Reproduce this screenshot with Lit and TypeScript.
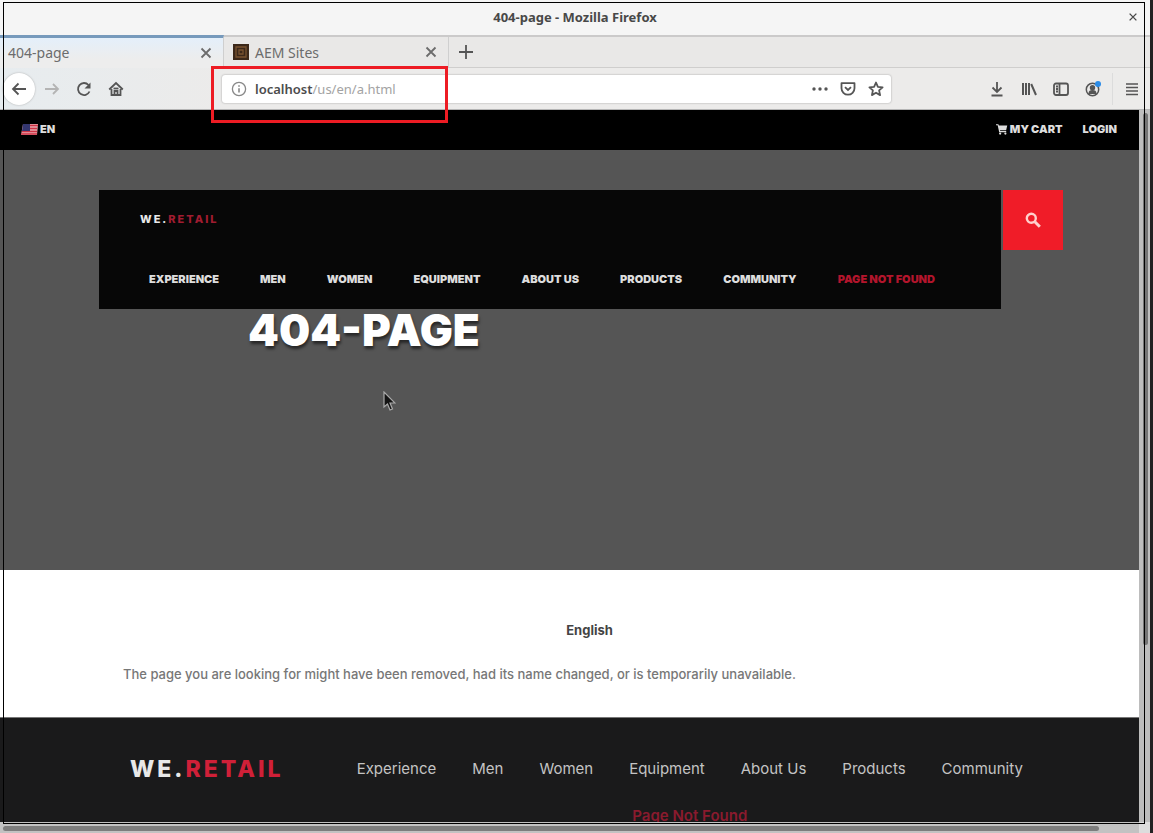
import { LitElement, html, css, svg } from "lit";
import { customElement, property } from "lit/decorators.js";

const NAV = ["Experience", "Men", "Women", "Equipment", "About Us", "Products", "Community"];

const glyphs: Record<string, unknown> = {
  back: svg`<path d="M15 8H2M7.500 2.500 2 8l5.500 5.500"/>`,
  forward: svg`<path d="M1 8h13M9 3l5 5-5 5"/>`,
  reload: svg`<path d="M13.500 10.500A6 6 0 1 1 12.500 4"/><path d="M14.500 1.500v6h-6z" fill="currentColor" stroke="none"/>`,
  home: svg`<path d="M1.200 8.500 8 2l6.800 6.500M3.500 8v6h9V8"/><path d="M6.500 14v-4h3v4"/><path d="M5.500 7.500h5"/>`,
  info: svg`<circle cx="8" cy="8" r="6.600" stroke-width="1.300"/><path d="M8 7.200v4.200M8 4.200v1.500" stroke-width="1.600"/>`,
  dots: svg`<g fill="currentColor" stroke="none"><circle cx="2" cy="8" r="1.700"/><circle cx="8" cy="8" r="1.700"/><circle cx="14" cy="8" r="1.700"/></g>`,
  pocket: svg`<path d="M1.500 2.200h13v5a6.500 6.500 0 0 1-13 0z" stroke-linejoin="round"/><path d="M5 6.200 8 9l3-2.800"/>`,
  star: svg`<path d="m8 1.500 1.900 4.300 4.700.500-3.500 3.100 1 4.700L8 11.700l-4.100 2.400 1-4.700L1.400 6.300l4.700-.500z" stroke-linejoin="round"/>`,
  download: svg`<path d="M8 1v9.500M3.500 6.500 8 11l4.500-4.500M2.500 14.500h11"/>`,
  library: svg`<path d="M2 2v12M5 2v12M8 2v12M10.200 3l4.800 11" stroke-width="2"/>`,
  sidebar: svg`<rect x="1" y="2.500" width="14" height="11.500" rx="2"/><path d="M6.500 3v11M3 5.500h2M3 8h2M3 10.500h2"/>`,
  account: svg`<circle cx="7.500" cy="8.500" r="6.200" stroke-width="1.500"/><circle cx="7.500" cy="6.800" r="1.800" fill="currentColor"/><path d="M4.500 12a3 2 0 0 1 6 0z" fill="currentColor"/><circle cx="13" cy="3" r="3" fill="#2b8ce8" stroke="none"/>`,
  menu: svg`<path d="M2 3h12M2 6.500h12M2 10h12M2 13.500h12" stroke-width="1.600"/>`,
  close: svg`<path d="m3.500 3.500 9 9m0-9-9 9"/>`,
  plus: svg`<path d="M8 1v14M1 8h14"/>`,
  cart: svg`<path d="M0 1.500h3.200l.600 1.800H15L13.500 9.500H5.300l.300 1.200h8v1.500H4.300L2.200 3H0z" fill="currentColor" stroke="none"/><g fill="currentColor" stroke="none"><circle cx="5.500" cy="14" r="1.500"/><circle cx="12.500" cy="14" r="1.500"/></g>`,
  search: svg`<circle cx="6.300" cy="6.300" r="4.500" stroke-width="2.400"/><path d="m9.800 9.800 5 5" stroke-width="3"/>`,
};

@customElement("ui-icon")
class UiIcon extends LitElement {
  @property() name = "";
  static styles = css`
    :host { display: inline-flex; width: 16px; height: 16px; flex: none; }
    svg { width: 100%; height: 100%; fill: none; stroke: currentColor; stroke-width: 1.8; }
  `;
  render() {
    return html`<svg viewBox="0 0 16 16" aria-hidden="true">${glyphs[this.name]}</svg>`;
  }
}

@customElement("browser-chrome")
class BrowserChrome extends LitElement {
  static styles = css`
    :host { display: block; font-family: "Noto Sans", sans-serif; color: #555; }
    button { border: 0; padding: 0; background: none; color: inherit; font: inherit; display: grid; place-items: center; }
    .title { display: grid; grid-template-columns: 1fr auto 1fr; align-items: center; height: 35px; box-sizing: border-box; padding-bottom: 2px; background: #f5f5f5; font-size: 13px; font-weight: 700; color: #484848; }
    .title button { grid-column: 3; justify-self: end; margin-right: 11px; }
    .title h1 { grid-column: 2; margin: 0; font: inherit; }
    .title ui-icon { width: 12px; height: 12px; }
    .tabs { display: flex; height: 33px; box-sizing: border-box; background: #e9e8e7; border-top: 2px solid #cbcaca; border-bottom: 1px solid #cfcecd; font-size: 14px; color: #6c6c6c; }
    .tab { display: flex; align-items: center; gap: 6px; width: 225px; box-sizing: border-box; padding: 0 9px; border-right: 1px solid #cfcfcf; }
    .tab.active { width: 224px; margin-top: -2px; margin-bottom: -1px; padding: 0 9px 1px 8px; border-top: 3px solid #779abc; background: linear-gradient(#e4effa, #ededed 70%); }
    .label { flex: 1; }
    .fav { width: 16px; height: 16px; }
    .new { width: 33px; color: #555; }
    .bar { display: flex; align-items: center; height: 42px; box-sizing: border-box; padding: 0 10px 0 3px; background: linear-gradient(90deg, #e7ecef, #ecebea 20%); border-bottom: 1px solid #b5b5b5; }
    .nav { display: flex; align-items: center; gap: 16px; }
    .back { width: 32px; height: 32px; border-radius: 50%; background: #fff; box-shadow: 0 0 2px #aaa; }
    .nav .fwd { color: #b4b4b4; margin-left: -7px; }
    .url { display: flex; flex: 1; align-items: center; height: 28px; box-sizing: border-box; margin: 0 98px; padding: 0 7px 0 9px; border-radius: 3px; background: #fff; box-shadow: 0 0 2px #999; font-size: 13px; }
    .url > ui-icon { color: #888; }
    .url label { margin-left: 8px; color: #4c4c4c; font-weight: 600; }
    .url input { flex: 1; min-width: 0; padding: 0; border: 0; outline: 0; background: none; font: inherit; color: #a3a3a3; }
    .acts { display: flex; gap: 12px; }
    .tools { display: flex; gap: 16px; }
    .menu { margin-left: 11px; padding-left: 11px; height: 32px; border-left: 1px solid #dcdcdc; }
  `;
  render() {
    const tool = (n: string, label: string, cls = "") =>
      html`<button class=${cls} aria-label=${label}><ui-icon name=${n}></ui-icon></button>`;
    return html`
      <div class="title"><h1>404-page - Mozilla Firefox</h1>${tool("close", "Close window")}</div>
      <div class="tabs">
        <div class="tab active"><span class="label">404-page</span>${tool("close", "Close tab")}</div>
        <div class="tab">
          <svg class="fav" viewBox="0 0 16 16" aria-hidden="true"><rect width="16" height="16" fill="#3c2819"/><path d="M3 3h10v10H3zM6 6h4v4H6z" fill="none" stroke="#795331" stroke-width="1.300"/></svg>
          <span class="label">AEM Sites</span>${tool("close", "Close tab")}
        </div>
        ${tool("plus", "New tab", "new")}
      </div>
      <div class="bar">
        <div class="nav">
          ${tool("back", "Back", "back")}${tool("forward", "Forward", "fwd")}${tool("reload", "Reload")}${tool("home", "Home")}
        </div>
        <div class="url">
          <ui-icon name="info"></ui-icon>
          <label for="address">localhost</label><input id="address" value="/us/en/a.html" />
          <div class="acts">${tool("dots", "Page actions")}${tool("pocket", "Save to Pocket")}${tool("star", "Bookmark")}</div>
        </div>
        <div class="tools">
          ${tool("download", "Downloads")}${tool("library", "Library")}${tool("sidebar", "Sidebars")}${tool("account", "Account")}
        </div>
        ${tool("menu", "Menu", "menu")}
      </div>
    `;
  }
}

@customElement("retail-page")
class RetailPage extends LitElement {
  static styles = css`
    :host { display: flex; flex-direction: column; overflow: hidden; font-family: Inter, sans-serif; background: #fff; }
    a { color: inherit; text-decoration: none; white-space: nowrap; }
    .top { display: flex; align-items: center; flex: none; height: 40px; box-sizing: border-box; padding: 0 22px 2px 21px; background: #000; color: #ddd; font-size: 11px; font-weight: 900; }
    .top a { display: flex; align-items: center; gap: 2px; }
    .lang { margin-right: auto; }
    .top .login { margin-left: 20px; }
    .flag { width: 17px; height: 11px; }
    .top ui-icon { width: 12px; height: 12px; }
    .hero { flex: none; box-sizing: border-box; height: 420px; padding: 40px 76px 0 99px; background: #555; }
    .head { display: flex; align-items: flex-start; gap: 2px; }
    .panel { flex: 1; box-sizing: border-box; height: 119px; padding: 0 41px; background: #070707; }
    .brand { display: block; font-weight: 800; color: #e8e8e8; }
    .brand span { color: #d02038; }
    .panel .brand { padding-top: 21px; line-height: 16px; font-size: 11px; letter-spacing: 2px; }
    .panel .brand span { color: #a01c30; }
    .links { display: flex; gap: 41px; padding: 44px 0 0 9px; line-height: 16px; font-size: 11px; font-weight: 900; text-transform: uppercase; color: #ddd; }
    .missing { color: #b3152c; }
    .search { display: grid; place-items: center; width: 60px; height: 60px; padding: 0; border: 0; background: #f01c28; color: #ffd0cc; }
    h2 { margin: 0 0 0 149px; line-height: 42px; font-size: 44px; font-weight: 900; color: #fff; text-shadow: 1px 3px 3px rgba(0, 0, 0, 0.55); }
    .body { flex: none; box-sizing: border-box; height: 147px; padding: 50px 83px 0 123px; font-size: 13px; line-height: 20px; font-weight: 500; color: #777; }
    h3 { margin: 0 0 24px; text-align: center; font-size: 13px; font-weight: 700; color: #444; }
    p { margin: 0; }
    footer { display: flex; align-items: flex-start; flex: 1; min-height: 0; padding: 39px 99px 0 130px; background: #1a1a1b; color: #c4c4c4; border-top: 1px solid #777; box-sizing: border-box; }
    footer .brand { line-height: 24px; font-size: 23px; letter-spacing: 3px; }
    footer nav { display: flex; flex: 1; flex-wrap: wrap; justify-content: center; gap: 23px 36px; padding-left: 56px; line-height: 24px; font-size: 15px; }
    footer .missing { color: #8a1a2e; font-weight: 600; }
  `;
  render() {
    const brand = html`<a class="brand" href="#">WE.<span>RETAIL</span></a>`;
    const links = html`${NAV.map((n) => html`<a href="#">${n}</a>`)}<a class="missing" href="#">Page Not Found</a>`;
    return html`
      <div class="top">
        <a class="lang" href="#">
          <svg class="flag" viewBox="0 0 17 11" aria-hidden="true"><path fill="#e9a9ae" d="M2 0h15l-1 11H0z"/><path d="M8 1.500h9M7 4.500h9M1 7.500h15M0 10h16" stroke="#cf3345" stroke-width="1.500"/><path fill="#34366f" d="M2 0h7v7H1z"/></svg>EN</a>
        <a href="#"><ui-icon name="cart"></ui-icon>MY CART</a>
        <a class="login" href="#">LOGIN</a>
      </div>
      <section class="hero">
        <div class="head">
          <div class="panel">${brand}<nav class="links">${links}</nav></div>
          <button class="search" aria-label="Search"><ui-icon name="search"></ui-icon></button>
        </div>
        <h2>404-PAGE</h2>
      </section>
      <section class="body">
        <h3>English</h3>
        <p>The page you are looking for might have been removed, had its name changed, or is temporarily unavailable.</p>
      </section>
      <footer>${brand}<nav>${links}</nav></footer>
    `;
  }
}

@customElement("app-root")
class AppRoot extends LitElement {
  static styles = css`
    :host { display: grid; grid-template: auto 1fr 11px / 1fr 11px; position: relative; height: 100vh; box-sizing: border-box; border-right: 3px solid #222; background: #b9b9b9; overflow: hidden; }
    browser-chrome { grid-column: 1 / 3; }
    retail-page { min-height: 0; }
    .vbar { padding: 3px 2px 0 4px; background: #bdbdbd; }
    .vthumb { height: 75%; border-radius: 3px; background: #747474; }
    .hbar { padding: 4px 40px 2px 3px; background: #c2c2c2; }
    .hthumb { height: 5px; border-radius: 3px; background: #7d7d7d; }
    .corner { background: #ddd; }
    .frame { position: absolute; inset: 2px 5px 9px 3px; border: 1px solid #000; pointer-events: none; }
    .mark { position: absolute; left: 211px; top: 66px; width: 237px; height: 57px; box-sizing: border-box; border: 3px solid #ed1c24; pointer-events: none; }
    .pointer { position: absolute; left: 383px; top: 391px; width: 13px; height: 20px; }
  `;
  render() {
    return html`
      <browser-chrome></browser-chrome>
      <retail-page></retail-page>
      <div class="vbar"><div class="vthumb"></div></div>
      <div class="hbar"><div class="hthumb"></div></div>
      <div class="corner"></div>
      <div class="frame"></div>
      <div class="mark"></div>
      <svg class="pointer" viewBox="0 0 13 20" aria-hidden="true"><path d="M1 1v15l3.500-3 2.500 6 2.500-1-2.500-6H12z" fill="#151515" stroke="#aaa" stroke-width="1.200"/></svg>
    `;
  }
}
